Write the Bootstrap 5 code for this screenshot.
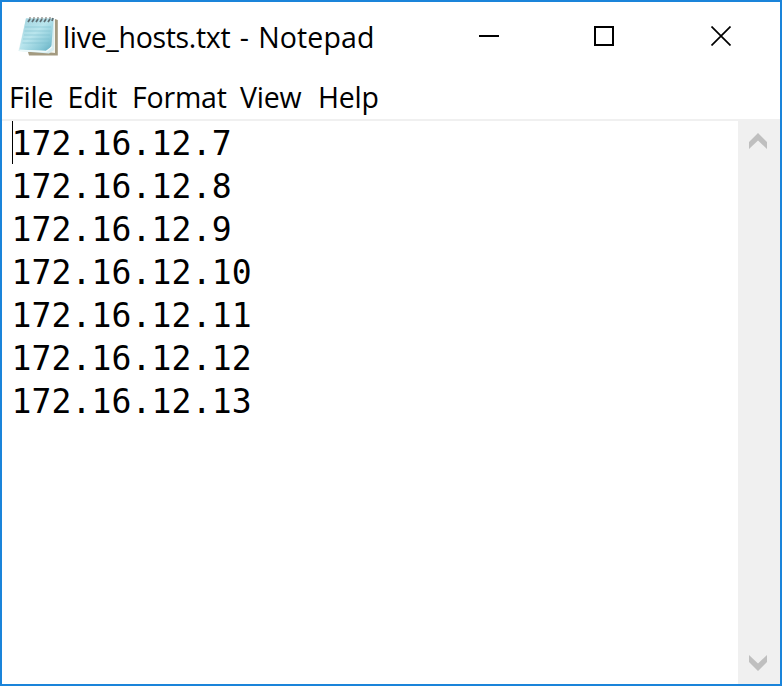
<!DOCTYPE html>
<html lang="en">
<head>
<meta charset="utf-8">
<meta name="viewport" content="width=device-width, initial-scale=1">
<title>live_hosts.txt - Notepad</title>
<link href="https://cdn.jsdelivr.net/npm/bootstrap@5.3.0/dist/css/bootstrap.min.css" rel="stylesheet">
<style>
  body { font-family: "Open Sans", "Noto Sans", sans-serif; color: #000; }
  .window { border: 2px solid #1a84da; }
  .titlebar { height: 76px; padding-left: 15px; }
  .app-icon { width: 44px; height: 44px; margin-top: 11px; }
  .title-text { font-size: 28.5px; line-height: 40px; margin-top: 15px; margin-left: 2px; letter-spacing: -.32px; word-spacing: 2.4px; }
  .title-text .app-name { letter-spacing: .15px; }
  .caption-btn { width: 116px; height: 68px; }
  .caption-btn:first-child { width: 114px; }
  .caption-btn:last-child { width: 118px; }
  .menubar { height: 41px; padding-left: 7px; font-size: 28.5px; line-height: 39px; }
  .menubar .menu-entry { color: #000; text-decoration: none; letter-spacing: -.2px; }
  .m-file { width: 58.5px; } .m-edit { width: 64.5px; } .m-format { width: 108px; } .m-view { width: 78px; }
  .divider { height: 2px; background: #f0f0f0; }
  .editor { padding-left: 9.5px; font: 33.1px/45px "DejaVu Sans Mono", monospace; }
  .editor .host { height: 43px; letter-spacing: .1px; }
  .caret { width: 1px; height: 43px; left: 10px; top: 0; background: #000; }
  .scrollbar-y { width: 42px; margin-top: -2px; background: #f0f0f0; padding: 14px 2px 13px 0; }
</style>
</head>
<body>
<div class="window vh-100 d-flex flex-column bg-white overflow-hidden">
  <header class="titlebar d-flex align-items-start flex-shrink-0">
    <svg class="app-icon flex-shrink-0" viewBox="0 0 44 44" aria-hidden="true">
      <defs>
        <linearGradient id="page" x1="0" y1="0" x2="1" y2="1">
          <stop offset="0" stop-color="#a0d2dd"/><stop offset=".45" stop-color="#b9e5ed"/><stop offset=".75" stop-color="#8ccbd9"/><stop offset="1" stop-color="#5dabc0"/>
        </linearGradient>
      </defs>
      <path d="M11 39H38V6l2.800 1V42.500H12z" fill="#a39a80"/>
      <path d="M36 5l2 2V40l-18-2z" fill="#f4f6ef"/>
      <path d="M9 5L37 5 37 37 32 40.500 1.500 38z" fill="#d8edf0"/>
      <path d="M9 5.500H36.500L34.500 32Q33 37 29 38L2.500 36.500z" fill="url(#page)"/>
      <path d="M8 14H34M7.500 18H33.500M7 22H33M6 26H32.500M5.500 30H32" stroke="#78bdcd" stroke-width="1" opacity=".5"/>
      <path d="M2.500 37.500L29 38.500 35 34" fill="none" stroke="#eefafb" stroke-width="1.500"/>
      <path d="M11 9l2-3M15 9l2-3M19 9l2-3M23 9l2-3M27 9l2-3M31 9l2-3M35 8l1-3" stroke="#5f6f74" stroke-width="1.800"/>
      <path d="M12 5h2M16 5h2M20 5h2M24 5h2M28 5h2M32 5h2" stroke="#9b9d9b" stroke-width="1.500"/>
    </svg>
    <div class="title-text text-nowrap">live_hosts.txt - <span class="app-name">Notepad</span></div>
    <div class="d-flex ms-auto">
      <div class="caption-btn d-flex align-items-center justify-content-center" role="button" aria-label="Minimize">
        <svg width="20" height="20"><path d="M0 10H20" stroke="#000" stroke-width="2"/></svg>
      </div>
      <div class="caption-btn d-flex align-items-center justify-content-center" role="button" aria-label="Maximize">
        <svg width="20" height="20"><path d="M1 1H19V19H1z" fill="none" stroke="#000" stroke-width="2"/></svg>
      </div>
      <div class="caption-btn d-flex align-items-center justify-content-center" role="button" aria-label="Close">
        <svg width="20" height="20"><path d="M.5 .5L19.500 19.500M19.500 .5L.5 19.500" stroke="#000" stroke-width="1.700"/></svg>
      </div>
    </div>
  </header>
  <nav class="menubar d-flex flex-shrink-0">
    <a class="menu-entry m-file">File</a>
    <a class="menu-entry m-edit">Edit</a>
    <a class="menu-entry m-format">Format</a>
    <a class="menu-entry m-view">View</a>
    <a class="menu-entry">Help</a>
  </nav>
  <div class="divider flex-shrink-0"></div>
  <main class="d-flex flex-grow-1">
    <div class="editor flex-grow-1 position-relative">
      <div class="host">172.16.12.7<span class="caret position-absolute"></span></div>
      <div class="host">172.16.12.8</div>
      <div class="host">172.16.12.9</div>
      <div class="host">172.16.12.10</div>
      <div class="host">172.16.12.11</div>
      <div class="host">172.16.12.12</div>
      <div class="host">172.16.12.13</div>
    </div>
    <div class="scrollbar-y d-flex flex-column justify-content-between align-items-center flex-shrink-0">
      <svg width="18" height="16"><path d="M0 9L9 0l9 9v7L9 7.500 0 16z" fill="#bfbfbf"/></svg>
      <svg width="18" height="16"><path d="M0 7L9 16l9-9V0L9 8.500 0 0z" fill="#bfbfbf"/></svg>
    </div>
  </main>
</div>
<script src="https://cdn.jsdelivr.net/npm/bootstrap@5.3.0/dist/js/bootstrap.bundle.min.js"></script>
</body>
</html>
